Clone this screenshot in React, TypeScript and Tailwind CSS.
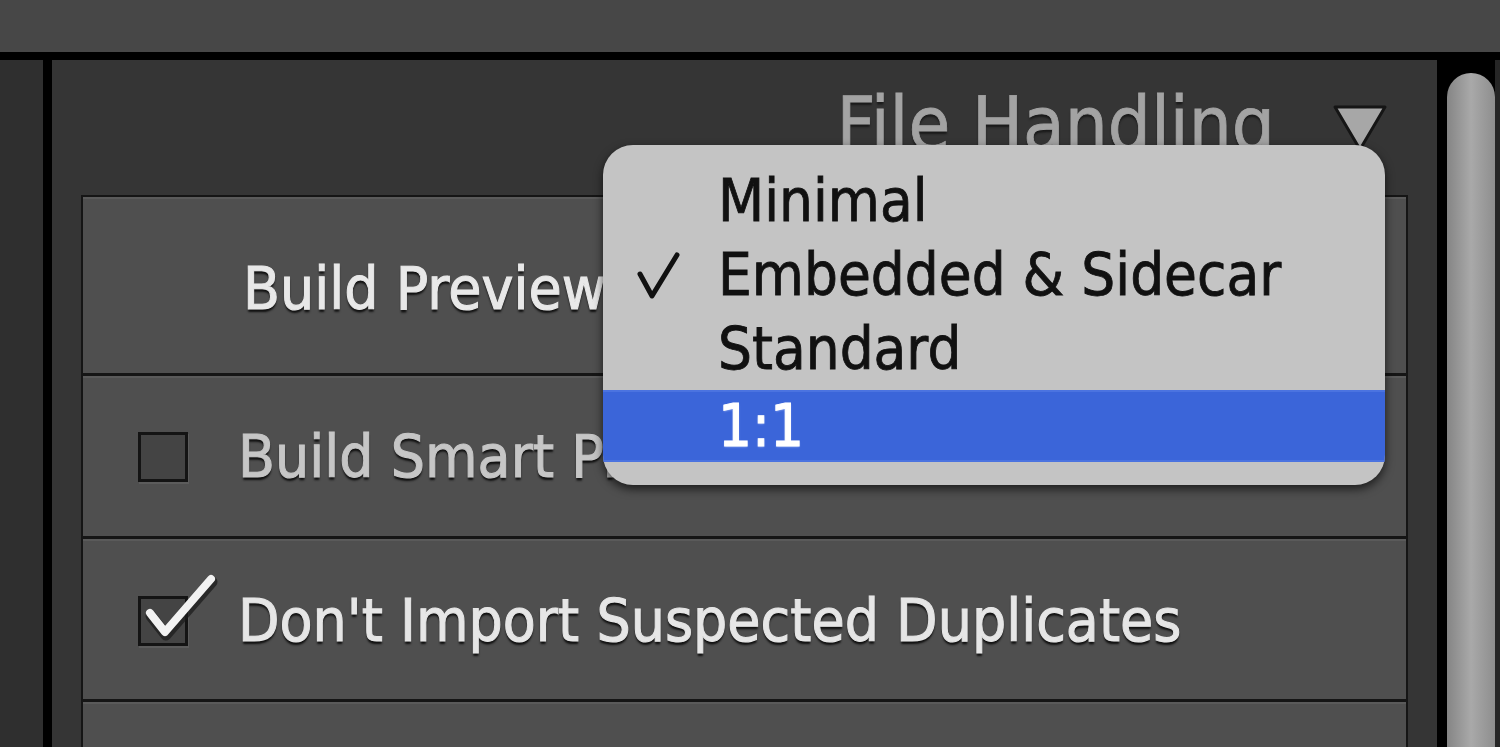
import React from "react";

const font = { fontFamily: '"DejaVu Sans", "Liberation Sans", sans-serif' };

function Checkbox({ checked }: { checked?: boolean }) {
  return (
    <div className="relative w-[50px] h-[50px] shrink-0">
      <div className="absolute inset-0 border-[3px] border-[#141414] bg-[#444444] shadow-[1px_2px_0_#5c5c5c]" />
      {checked && (
        <svg
          className="absolute left-[-6px] top-[-28px] overflow-visible"
          width="90"
          height="80"
          viewBox="-6 -28 90 80"
        >
          <path
            d="M12 17 L27 36 L73 -17"
            fill="none"
            stroke="#1a1a1a"
            strokeWidth="11"
            strokeLinecap="round"
            strokeLinejoin="round"
            transform="translate(1 3)"
            opacity="0.7"
          />
          <path
            d="M12 17 L27 36 L73 -17"
            fill="none"
            stroke="#f2f2f2"
            strokeWidth="8"
            strokeLinecap="round"
            strokeLinejoin="round"
          />
        </svg>
      )}
    </div>
  );
}

export default function App() {
  return (
    <div
      className="relative w-[1500px] h-[747px] overflow-hidden bg-black flex flex-col"
      style={font}
    >
      {/* top bar */}
      <div className="h-[52px] shrink-0 bg-[#474747]" />
      <div className="h-[8px] shrink-0 bg-black" />

      <div className="flex flex-1 min-h-0">
        {/* left strip */}
        <div className="w-[43px] bg-[#2f2f2f]" />
        <div className="w-[9px] bg-black" />

        {/* panel */}
        <div className="w-[1385px] bg-[#353535] flex flex-col">
          {/* header */}
          <div className="h-[135px] shrink-0 flex justify-end items-start pr-[49px]">
            <span className="mt-[31px] mr-[57px] inline-block scale-y-110 text-[68px] leading-none text-[#a3a3a3] [text-shadow:0_2px_2px_#1a1a1a] [-webkit-text-stroke:0.8px_#a3a3a3]">
              File Handling
            </span>
            <svg className="mt-[44px]" width="56" height="46" viewBox="0 0 56 46">
              <path
                d="M3 3 L53 3 L30 42 Q28 45 26 42 Z"
                fill="#a7a7a7"
                stroke="#151515"
                strokeWidth="3"
                strokeLinejoin="round"
              />
            </svg>
          </div>

          {/* rows */}
          <div className="ml-[29px] w-[1327px] border-t-2 border-l-2 border-r-2 border-[#151515] flex flex-col">
            <div className="h-[179px] shrink-0 bg-[#4f4f4f] border-b-[3px] border-[#151515] shadow-[inset_0_2px_0_#5a5a5a] flex items-center pl-[160px] pt-[8px]">
              <span className="inline-block scale-y-110 text-[54px] leading-none text-[#e8e8e8] [text-shadow:0_3px_2px_#111] [-webkit-text-stroke:1px_#e8e8e8]">
                Build Previews
              </span>
            </div>
            <div className="h-[163px] shrink-0 bg-[#4f4f4f] border-b-[3px] border-[#151515] shadow-[inset_0_2px_0_#5a5a5a] flex items-center pl-[55px] pt-[2px]">
              <Checkbox />
              <span className="ml-[50px] inline-block scale-y-110 text-[54px] leading-none text-[#c6c6c6] [text-shadow:0_3px_2px_#111] [-webkit-text-stroke:1px_#c6c6c6]">
                Build Smart Previews
              </span>
            </div>
            <div className="h-[163px] shrink-0 bg-[#4f4f4f] border-b-[3px] border-[#151515] shadow-[inset_0_2px_0_#5a5a5a] flex items-center pl-[55px] pt-[4px]">
              <Checkbox checked />
              <span className="ml-[50px] inline-block scale-y-110 text-[54px] leading-none text-[#e6e6e6] [text-shadow:0_3px_2px_#111] [-webkit-text-stroke:1px_#e6e6e6]">
                Don't Import Suspected Duplicates
              </span>
            </div>
            <div className="h-[163px] shrink-0 bg-[#4f4f4f] shadow-[inset_0_2px_0_#5a5a5a]" />
          </div>
        </div>

        {/* gap + scrollbar */}
        <div className="w-[10px] bg-black" />
        <div className="w-[48px] flex flex-col">
          <div className="h-[13px] bg-black" />
          <div className="flex-1 rounded-t-[24px] bg-gradient-to-r from-[#858585] via-[#a9a9a9] to-[#8e8e8e]" />
        </div>
        <div className="w-[5px] bg-[#262626]" />
      </div>

      {/* popup menu */}
      <div className="absolute left-[603px] top-[145px] w-[782px] h-[340px] rounded-[30px] bg-[#c4c4c4] shadow-[0_4px_10px_rgba(0,0,0,0.65)] pt-[19px] overflow-hidden">
        <div className="h-[74px] flex items-center pl-[115px]">
          <span className="inline-block scale-y-110 text-[53.5px] leading-none text-[#111] [-webkit-text-stroke:0.8px_#111]">Minimal</span>
        </div>
        <div className="relative h-[74px] flex items-center pl-[115px]">
          <svg className="absolute left-[32px] top-[14px]" width="50" height="50" viewBox="0 0 50 50">
            <path
              d="M5 22 L17 44 L42 3"
              fill="none"
              stroke="#111"
              strokeWidth="5"
              strokeLinecap="round"
              strokeLinejoin="round"
            />
          </svg>
          <span className="inline-block scale-y-110 text-[53.5px] leading-none text-[#111] [-webkit-text-stroke:0.8px_#111]">
            Embedded &amp; Sidecar
          </span>
        </div>
        <div className="h-[74px] flex items-center pl-[115px]">
          <span className="inline-block scale-y-110 text-[53.5px] leading-none text-[#111] [-webkit-text-stroke:0.8px_#111]">Standard</span>
        </div>
        <div className="mt-[4px] h-[72px] flex items-center pl-[115px] bg-[#3b65d9] border-t-2 border-b-2 border-[#4b73e0]">
          <span className="inline-block scale-y-110 text-[53.5px] leading-none text-white [text-shadow:0_1px_2px_#8fa8ee] [-webkit-text-stroke:1px_#ffffff]">
            1:1
          </span>
        </div>
      </div>
    </div>
  );
}
